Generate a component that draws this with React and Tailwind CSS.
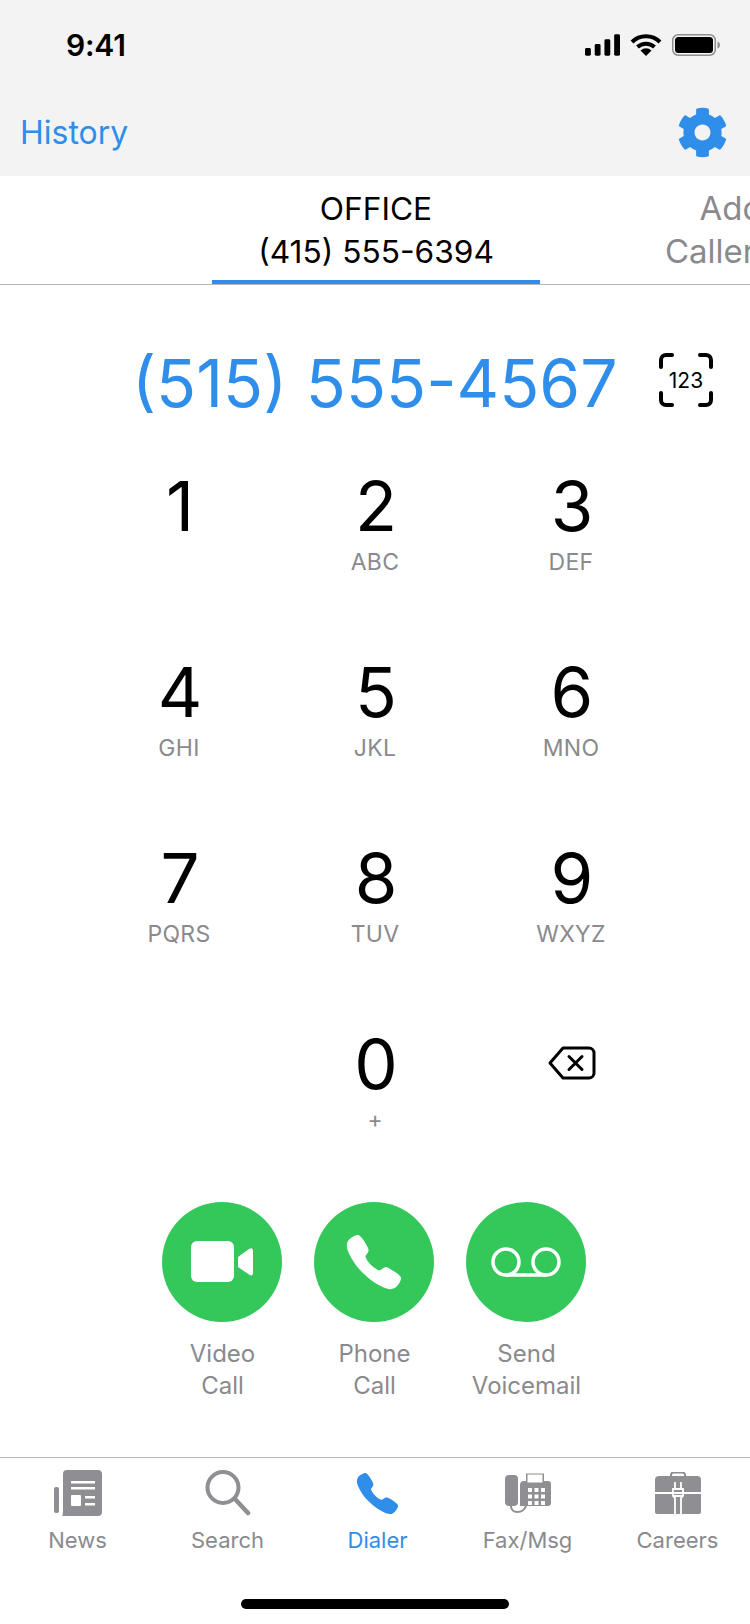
import React from "react";
import { FaCog } from "react-icons/fa";
import { IoCall } from "react-icons/io5";

const KEYS = [
  ["1", ""],
  ["2", "ABC"],
  ["3", "DEF"],
  ["4", "GHI"],
  ["5", "JKL"],
  ["6", "MNO"],
  ["7", "PQRS"],
  ["8", "TUV"],
  ["9", "WXYZ"],
];

function StatusIcons() {
  return (
    <div className="flex items-center gap-[10px]">
      <svg width="35" height="22" viewBox="0 0 36 22" fill="#000">
        <rect x="0" y="14" width="6" height="8" rx="1.5" />
        <rect x="10" y="10" width="6" height="12" rx="1.5" />
        <rect x="20" y="5" width="6" height="17" rx="1.5" />
        <rect x="30" y="0" width="6" height="22" rx="1.5" />
      </svg>
      <svg width="32" height="22" viewBox="0 0 32 22" fill="none" stroke="#000" strokeWidth="4">
        <path d="M2 8 A20 20 0 0 1 30 8" />
        <path d="M7.5 13 A12.5 12.5 0 0 1 24.5 13" />
        <path d="M16 22 L10.5 16.5 A8 8 0 0 1 21.5 16.5 Z" fill="#000" stroke="none" />
      </svg>
      <svg width="48" height="22" viewBox="0 0 48 22" fill="none">
        <rect x="0.75" y="0.75" width="42.5" height="20.5" rx="5.5" stroke="#8e8e8e" strokeWidth="1.5" />
        <rect x="3" y="3" width="38" height="16" rx="3.5" fill="#000" />
        <path d="M45.5 7.5 C47 8 48 9.5 48 11 C48 12.5 47 14 45.5 14.5 Z" fill="#8e8e8e" />
      </svg>
    </div>
  );
}

function ScanIcon() {
  return (
    <div className="relative mb-[6px] flex h-[54px] w-[54px] items-center justify-center">
      <svg className="absolute inset-0" width="54" height="54" viewBox="0 0 54 54" fill="none" stroke="#000" strokeWidth="4" strokeLinecap="round">
        <path d="M2 14 V7 A5 5 0 0 1 7 2 H13" />
        <path d="M41 2 H47 A5 5 0 0 1 52 7 V14" />
        <path d="M2 40 V47 A5 5 0 0 0 7 52 H13" />
        <path d="M41 52 H47 A5 5 0 0 0 52 47 V40" />
      </svg>
      <span className="text-[21px] leading-none text-black">123</span>
    </div>
  );
}

function Backspace() {
  return (
    <svg width="48" height="34" viewBox="0 0 48 34" fill="none" stroke="#000" strokeWidth="3" strokeLinejoin="round" strokeLinecap="round">
      <path d="M15 2 H41 A5 5 0 0 1 46 7 V27 A5 5 0 0 1 41 32 H15 L2 17 Z" />
      <path d="M21 10.5 L34 23.5 M34 10.5 L21 23.5" />
    </svg>
  );
}

function VideoIcon() {
  return (
    <svg width="62" height="42" viewBox="0 0 62 42" fill="#fff">
      <rect x="0" y="0" width="43" height="41" rx="6" />
      <path d="M47 16 L58 8 Q62 6 62 10 V32 Q62 36 58 33.5 L47 26 Z" />
    </svg>
  );
}

function VoicemailIcon() {
  return (
    <svg width="70" height="30" viewBox="0 0 70 30" fill="none" stroke="#fff" strokeWidth="3.5">
      <circle cx="15" cy="15" r="13" />
      <circle cx="55" cy="15" r="13" />
      <path d="M15 28 H55" />
    </svg>
  );
}

function NewsIcon() {
  return (
    <svg width="48" height="46" viewBox="0 0 48 46">
      <rect x="0" y="17" width="5" height="26" rx="2" fill="#8e8e93" />
      <path d="M13 0 H44 A4 4 0 0 1 48 4 V42 A4 4 0 0 1 44 46 H8 Q9 45 9 42 V4 A4 4 0 0 1 13 0 Z" fill="#8e8e93" />
      <rect x="17" y="11" width="24" height="2.5" fill="#fff" />
      <rect x="17" y="17" width="24" height="2.5" fill="#fff" />
      <rect x="17" y="25" width="10" height="11" rx="1" fill="#fff" />
      <rect x="31" y="26" width="10" height="2.5" fill="#fff" />
      <rect x="31" y="33" width="10" height="2.5" fill="#fff" />
    </svg>
  );
}

function SearchIcon() {
  return (
    <svg width="46" height="46" viewBox="0 0 46 46" fill="none" stroke="#8e8e93" strokeWidth="4" strokeLinecap="round">
      <circle cx="18" cy="17.5" r="15.5" />
      <path d="M30 29 L43 43" strokeWidth="4.5" />
    </svg>
  );
}

function FaxIcon() {
  const dots = [];
  for (let row = 0; row < 3; row++) {
    for (let col = 0; col < 3; col++) {
      dots.push(<rect key={`${row}-${col}`} x={23 + col * 6.5} y={16 + row * 6.5} width="4" height="4" fill="#fff" />);
    }
  }
  return (
    <svg width="46" height="42" viewBox="0 0 46 42">
      <rect x="0" y="3" width="13" height="31" rx="4" fill="#8e8e93" />
      <path d="M19 9 H21 V1.5 H39 V9 H43 A3 3 0 0 1 46 12 V31 A3 3 0 0 1 43 34 H15 V13 A4 4 0 0 1 19 9 Z" fill="#8e8e93" />
      <rect x="22.5" y="2.5" width="15" height="8" fill="#fff" />
      {dots}
      <path d="M6 34 C6 42 18 42 21 34" fill="none" stroke="#8e8e93" strokeWidth="2" />
    </svg>
  );
}

function BriefcaseIcon() {
  return (
    <svg width="46" height="42" viewBox="0 0 46 42">
      <path d="M16 5 V3 A2.5 2.5 0 0 1 18.5 0.5 H27.5 A2.5 2.5 0 0 1 30 3 V5" fill="none" stroke="#8e8e93" strokeWidth="2" />
      <path d="M4 4 H42 A4 4 0 0 1 46 8 V20 H0 V8 A4 4 0 0 1 4 4 Z" fill="#8e8e93" />
      <path d="M0 22 H46 V40 A2 2 0 0 1 44 42 H2 A2 2 0 0 1 0 40 Z" fill="#8e8e93" />
      <path d="M20 10 V17 H18 V24 L20 26 V42 M26 10 V17 H28 V24 L26 26 V42 M18 17 H28 M18 24 H28" fill="none" stroke="#fff" strokeWidth="1.8" />
    </svg>
  );
}

function CallAction({ label, second, children }) {
  return (
    <div className="flex w-[120px] flex-col items-center">
      <div className="flex h-[120px] w-[120px] items-center justify-center rounded-full bg-[#34c85a]">
        {children}
      </div>
      <div className="mt-[16px] whitespace-nowrap pl-[1px] text-center text-[24px] leading-[32px] text-[#8a8a8e]">
        <div>{label}</div>
        <div>{second}</div>
      </div>
    </div>
  );
}

function TabItem({ label, active, children }) {
  return (
    <div className="flex flex-col items-center pl-[5px]">
      <div className="flex h-[46px] items-center justify-center">{children}</div>
      <span className={`mt-[9px] text-[22px] leading-[30px] ${active ? "text-[#2f8eea]" : "text-[#8a8a8e]"}`}>
        {label}
      </span>
    </div>
  );
}

export default function App() {
  return (
    <div
      className="flex h-[1624px] w-[750px] flex-col overflow-hidden bg-white"
      style={{ fontFamily: "Inter, 'Noto Sans', sans-serif" }}
    >
      <div className="h-[176px] bg-[#f3f3f3]">
        <div className="flex h-[90px] items-center justify-between pl-[66px] pr-[30px]">
          <span className="text-[30px] font-semibold leading-none tracking-[-0.2px] text-black">9:41</span>
          <StatusIcons />
        </div>
        <div className="flex h-[84px] items-center justify-between pl-[20px] pr-[22px]">
          <span className="mt-[2px] text-[32px] leading-none text-[#2f8eea]">History</span>
          <FaCog size={51} color="#2f8eea" />
        </div>
      </div>

      <div className="flex h-[109px] border-b border-[#b8b8b8] pl-[212px]">
        <div className="flex h-[108px] w-[328px] shrink-0 flex-col items-center border-b-4 border-[#2f8eea] pt-[11px] text-[31.7px] leading-[43px] text-black">
          <span>OFFICE</span>
          <span>(415) 555-6394</span>
        </div>
        <div className="flex w-[382px] shrink-0 flex-col items-center whitespace-nowrap pt-[11px] text-[33px] leading-[43px] text-[#8a8a8e]">
          <span>Add</span>
          <span>Caller ID</span>
        </div>
      </div>

      <div className="mt-[70px] flex h-[56px] items-center pl-[132px]">
        <span className="w-[527px] whitespace-nowrap text-[66px] leading-none text-[#2f8eea]">(515) 555-4567</span>
        <ScanIcon />
      </div>

      <div className="ml-[82px] mt-[55px] grid w-[588px] grid-cols-3 auto-rows-[186px]">
        {KEYS.map(([digit, letters]) => (
          <div key={digit} className="flex flex-col items-center">
            <span className="text-[69px] leading-[80px] text-black">{digit}</span>
            <span className="mt-[1px] pr-[2px] text-[23px] leading-[30px] tracking-[0.3px] text-[#8a8a8e]">{letters}</span>
          </div>
        ))}
        <div />
        <div className="flex flex-col items-center">
          <span className="text-[69px] leading-[80px] text-black">0</span>
          <span className="mt-[1px] pr-[2px] text-[23px] leading-[30px] text-[#8a8a8e]">+</span>
        </div>
        <div className="flex h-[80px] items-center justify-center pb-[2px]">
          <Backspace />
        </div>
      </div>

      <div className="ml-[162px] mt-[-8px] flex gap-[32px]">
        <CallAction label="Video" second="Call">
          <VideoIcon />
        </CallAction>
        <CallAction label="Phone" second="Call">
          <IoCall size={62} color="#fff" />
        </CallAction>
        <CallAction label="Send" second="Voicemail">
          <VoicemailIcon />
        </CallAction>
      </div>

      <div className="mt-[55px] grid grid-cols-5 border-t border-[#b8b8b8] pt-[12px]">
        <TabItem label="News"><NewsIcon /></TabItem>
        <TabItem label="Search"><SearchIcon /></TabItem>
        <TabItem label="Dialer" active><IoCall size={47} color="#2f8eea" /></TabItem>
        <TabItem label="Fax/Msg"><FaxIcon /></TabItem>
        <TabItem label="Careers"><BriefcaseIcon /></TabItem>
      </div>

      <div className="mx-auto mt-[44px] h-[10px] w-[268px] rounded-full bg-black" />
    </div>
  );
}
